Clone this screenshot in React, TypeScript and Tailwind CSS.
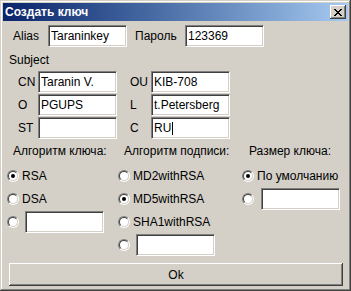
import React from "react";

const font = { fontFamily: '"Liberation Sans", Arial, sans-serif' };

function Field({ value, caret, className = "" }: { value?: string; caret?: boolean; className?: string }) {
  return (
    <div
      className={
        "h-[22px] w-[79px] bg-white border border-t-[#808080] border-l-[#808080] border-b-white border-r-white shadow-[inset_1px_1px_#404040,inset_-1px_-1px_#d4d0c8] pl-[2px] flex items-center text-[12px] text-black leading-[14px] " +
        className
      }
    >
      <span>{value}</span>
      {caret && <span className="inline-block w-[1px] h-[13px] bg-black ml-[1px]" />}
    </div>
  );
}

function Radio({ checked }: { checked?: boolean }) {
  return (
    <div className="w-[12px] h-[12px] shrink-0 rounded-full border border-t-[#808080] border-l-[#808080] border-b-white border-r-white">
      <div className="w-full h-full rounded-full border border-t-[#404040] border-l-[#404040] border-b-[#d4d0c8] border-r-[#d4d0c8] bg-white flex items-center justify-center">
        {checked && <div className="w-[4px] h-[4px] rounded-full bg-black" />}
      </div>
    </div>
  );
}

function Row({ children }: { children: React.ReactNode }) {
  return <div className="h-[23px] flex items-center">{children}</div>;
}

export default function App() {
  return (
    <div
      style={font}
      className="w-[351px] h-[291px] bg-[#d4d0c8] p-[3px] text-[12px] leading-[14px] text-black shadow-[inset_-1px_-1px_#404040,inset_1px_1px_#d4d0c8,inset_-2px_-2px_#808080,inset_2px_2px_#ffffff]"
    >
      {/* Title bar */}
      <div className="h-[18px] flex items-center justify-between pl-[2px] pr-[2px] bg-gradient-to-r from-[#0a246a] to-[#a6caf0]">
        <span className="text-white font-bold text-[12px] leading-[14px]">Создать ключ</span>
        <div className="w-[16px] h-[14px] bg-[#d4d0c8] flex items-center justify-center shadow-[inset_-1px_-1px_#404040,inset_1px_1px_#ffffff,inset_-2px_-2px_#808080,inset_2px_2px_#d4d0c8]">
          <svg width="8" height="7" viewBox="0 0 8 7" shapeRendering="crispEdges" className="ml-[-1px]">
            <path
              d="M0 0h2v1H0zM6 0h2v1H6zM1 1h2v1H1zM5 1h2v1H5zM2 2h4v1H2zM3 3h2v1H3zM2 4h4v1H2zM1 5h2v1H1zM5 5h2v1H5zM0 6h2v1H0zM6 6h2v1H6z"
              fill="#000"
            />
          </svg>
        </div>
      </div>

      {/* Alias / Password */}
      <div className="mt-[4px] h-[22px] flex items-center">
        <span className="w-[45px] pl-[10px]">Alias</span>
        <Field value="Taraninkey" />
        <span className="w-[58px] pl-[8px]">Пароль</span>
        <Field value="123369" />
      </div>

      <div className="mt-[6px] pl-[6px] h-[14px]">Subject</div>

      <div className="mt-[4px] flex flex-col gap-[1px]">
        {[
          ["CN", "Taranin V.", "OU", "KIB-708", false],
          ["O", "PGUPS", "L", "t.Petersberg", false],
          ["ST", "", "C", "RU", true],
        ].map(([l1, v1, l2, v2, c]) => (
          <div key={l1 as string} className="h-[22px] flex items-center">
            <span className="w-[35px] pl-[15px]">{l1 as string}</span>
            <Field value={v1 as string} />
            <span className="w-[34px] pl-[13px]">{l2 as string}</span>
            <Field value={v2 as string} caret={c as boolean} />
          </div>
        ))}
      </div>

      {/* Radio groups */}
      <div className="mt-[5px] flex pl-[4px]">
        <div className="w-[111px] flex flex-col">
          <div className="h-[14px] pl-[6px] mb-[6px]">Алгоритм ключа:</div>
          <Row>
            <Radio checked />
            <span className="ml-[3px]">RSA</span>
          </Row>
          <Row>
            <Radio />
            <span className="ml-[3px]">DSA</span>
          </Row>
          <Row>
            <Radio />
            <Field className="ml-[6px]" />
          </Row>
        </div>
        <div className="w-[124px] flex flex-col">
          <div className="h-[14px] pl-[6px] mb-[6px]">Алгоритм подписи:</div>
          <Row>
            <Radio />
            <span className="ml-[3px]">MD2withRSA</span>
          </Row>
          <Row>
            <Radio checked />
            <span className="ml-[3px]">MD5withRSA</span>
          </Row>
          <Row>
            <Radio />
            <span className="ml-[3px]">SHA1withRSA</span>
          </Row>
          <Row>
            <Radio />
            <Field className="ml-[6px]" />
          </Row>
        </div>
        <div className="flex-1 flex flex-col">
          <div className="h-[14px] pl-[7px] mb-[6px]">Размер ключа:</div>
          <Row>
            <Radio checked />
            <span className="ml-[3px]">По умолчанию</span>
          </Row>
          <Row>
            <Radio />
            <Field className="ml-[7px]" />
          </Row>
        </div>
      </div>

      {/* Ok button */}
      <div className="mt-[7px] ml-[6px] w-[334px] h-[23px] flex items-center justify-center bg-[#d4d0c8] shadow-[inset_-1px_-1px_#404040,inset_1px_1px_#ffffff,inset_-2px_-2px_#808080,inset_2px_2px_#d4d0c8]">
        Ok
      </div>
    </div>
  );
}
